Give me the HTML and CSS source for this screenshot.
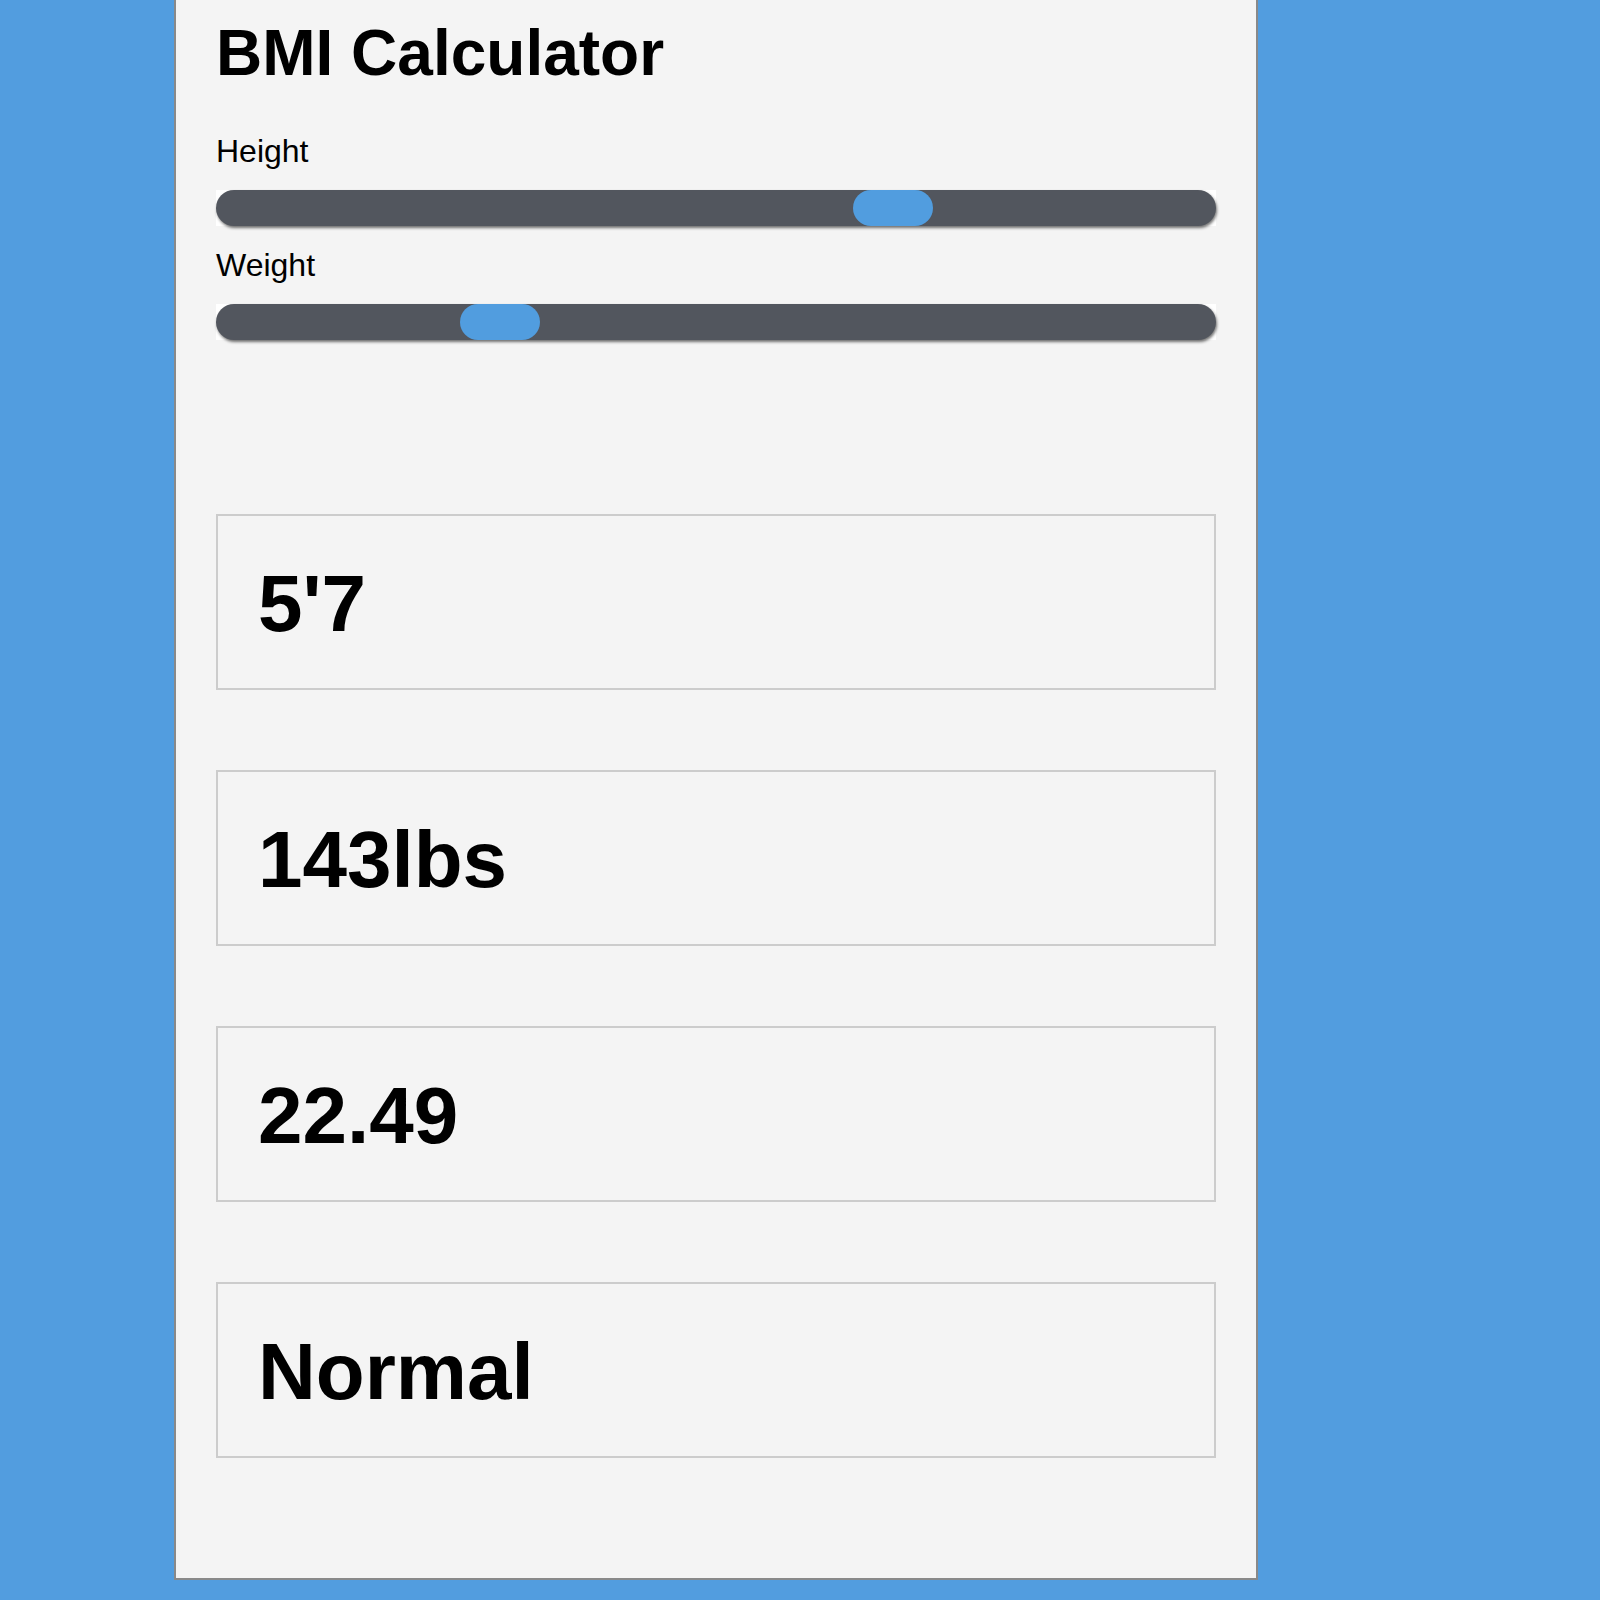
FILE: index.html
```html
<!DOCTYPE html>
<html lang="en">
<head>
<meta charset="utf-8">
<title>BMI Calculator</title>
<link rel="stylesheet" href="styles.css">
</head>
<body>
<main class="card">
  <h1 class="title">BMI Calculator</h1>
  <label class="field-label" for="height">Height</label>
  <input class="slider" id="height" type="range" min="40" max="79" value="67">
  <label class="field-label" for="weight">Weight</label>
  <input class="slider" id="weight" type="range" min="80" max="318" value="143">
  <section class="results">
    <div class="result">5'7</div>
    <div class="result">143lbs</div>
    <div class="result">22.49</div>
    <div class="result">Normal</div>
  </section>
</main>
</body>
</html>
```

FILE: styles.css
```css
html, body {
  margin: 0;
  padding: 0;
}

body {
  background: #529ddf;
  font-family: "Liberation Sans", Arial, Helvetica, sans-serif;
  color: #000;
}

.card {
  box-sizing: border-box;
  width: 1084px;
  margin-left: 174px;
  background: #f4f4f4;
  border: 2px solid #898989;
  border-top: 0;
  padding: 16px 40px 120px;
}

.title {
  margin: 0 0 44px;
  font-size: 64px;
  line-height: 74px;
  font-weight: bold;
}

.field-label {
  display: block;
  font-size: 32px;
  line-height: 34px;
  margin: 0 0 22px;
}

.slider {
  -webkit-appearance: none;
  appearance: none;
  display: block;
  box-sizing: border-box;
  width: 100%;
  height: 36px;
  margin: 0 0 22px;
  padding: 0;
  border: 0;
  background: #ffffff;
  outline: none;
}

.slider::-webkit-slider-runnable-track {
  height: 36px;
  background: #52565e;
  border-radius: 18px;
  box-shadow: 1px 2px 3px rgba(0, 0, 0, 0.55);
}

.slider::-webkit-slider-thumb {
  -webkit-appearance: none;
  appearance: none;
  width: 80px;
  height: 36px;
  border: 0;
  border-radius: 18px;
  background: #519ddf;
}

.slider::-moz-range-track {
  height: 36px;
  background: #52565e;
  border-radius: 18px;
  box-shadow: 1px 2px 3px rgba(0, 0, 0, 0.55);
}

.slider::-moz-range-thumb {
  width: 80px;
  height: 36px;
  border: 0;
  border-radius: 18px;
  background: #519ddf;
}

.results {
  display: flex;
  flex-direction: column;
  gap: 80px;
  margin-top: 174px;
}

.result {
  border: 2px solid #cccccc;
  padding: 42px 40px 38px;
  font-size: 80px;
  line-height: 92px;
  font-weight: bold;
}
```
